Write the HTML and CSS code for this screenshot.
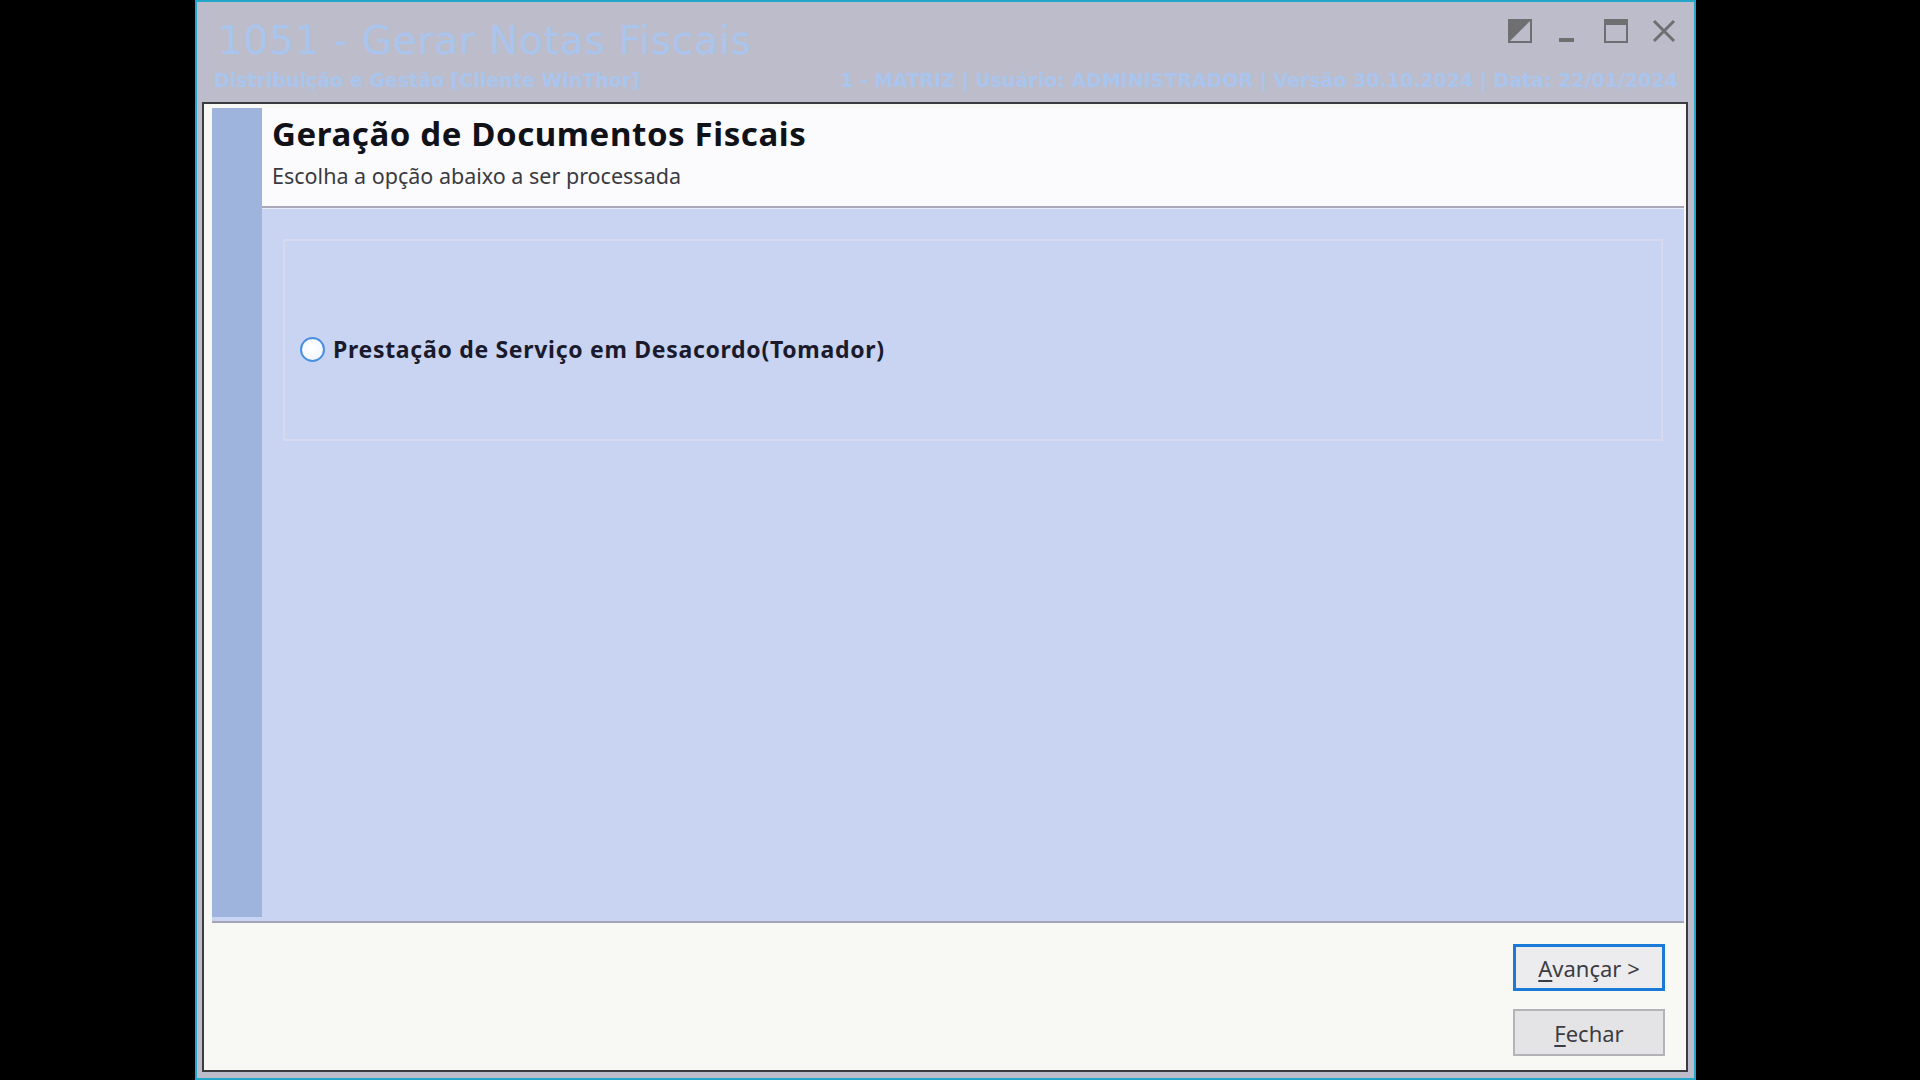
FILE: index.html
```html
<!DOCTYPE html>
<html lang="pt-BR">
<head>
<meta charset="utf-8">
<title>1051 - Gerar Notas Fiscais</title>
<link rel="stylesheet" href="styles.css">
</head>
<body>
<div class="window">
  <div class="titlebar">
    <div class="title-row">
      <div class="app-title">1051 - Gerar Notas Fiscais</div>
      <div class="controls">
        <svg class="ctl" viewBox="0 0 24 24" width="24" height="24" aria-hidden="true">
          <polygon points="1,1 23,1 1,23" fill="#6f6f72"/>
          <rect x="1" y="1" width="22" height="22" fill="none" stroke="#6f6f72" stroke-width="2"/>
        </svg>
        <svg class="ctl" viewBox="0 0 24 24" width="24" height="24" aria-hidden="true">
          <rect x="3" y="19" width="15" height="4" fill="#6f6f72"/>
        </svg>
        <svg class="ctl" viewBox="0 0 24 24" width="24" height="24" aria-hidden="true">
          <rect x="1" y="1" width="22" height="22" fill="none" stroke="#6f6f72" stroke-width="2"/>
          <rect x="1" y="1" width="22" height="5" fill="#6f6f72"/>
        </svg>
        <svg class="ctl" viewBox="0 0 24 24" width="24" height="24" aria-hidden="true">
          <path d="M2 2 L22 22 M22 2 L2 22" stroke="#6f6f72" stroke-width="3" fill="none"/>
        </svg>
      </div>
    </div>
    <div class="sub-row">
      <span>Distribuição e Gestão [Cliente WinThor]</span>
      <span>1 - MATRIZ | Usuário: ADMINISTRADOR | Versão 30.10.2024 | Data: 22/01/2024</span>
    </div>
  </div>
  <div class="panel">
    <div class="wizard">
      <div class="strip"></div>
      <div class="main">
        <div class="header">
          <h1 class="wiz-title">Geração de Documentos Fiscais</h1>
          <p class="wiz-sub">Escolha a opção abaixo a ser processada</p>
        </div>
        <div class="content">
          <div class="group">
            <label class="radio">
              <span class="dot"></span>
              <span class="radio-text">Prestação de Serviço em Desacordo(Tomador)</span>
            </label>
          </div>
        </div>
      </div>
    </div>
    <div class="footer">
      <button class="btn primary" type="button"><u>A</u>vançar &gt;</button>
      <button class="btn" type="button"><u>F</u>echar</button>
    </div>
  </div>
</div>
</body>
</html>
```

FILE: styles.css
```css
html, body {
  margin: 0;
  padding: 0;
  width: 1920px;
  height: 1080px;
  overflow: hidden;
  background: #000;
}

.window {
  margin-left: 195px;
  width: 1501px;
  height: 1080px;
  box-sizing: border-box;
  border: 2px solid #22a6c9;
  background: #bcbccb;
  display: flex;
  flex-direction: column;
}

.titlebar {
  height: 100px;
  box-sizing: border-box;
  padding: 0 18px 0 21px;
  color: #a9c5ee;
}

.title-row {
  display: flex;
  justify-content: space-between;
  height: 64px;
}

.app-title {
  font-family: "DejaVu Sans", sans-serif;
  font-size: 39px;
  line-height: 44px;
  letter-spacing: 0.8px;
  padding-top: 17px;
}

.controls {
  display: flex;
  gap: 24px;
  padding-top: 17px;
  height: 24px;
}

.ctl {
  display: block;
}

.sub-row {
  display: flex;
  justify-content: space-between;
  font-family: "DejaVu Sans", sans-serif;
  font-weight: bold;
  font-size: 19px;
  line-height: 22px;
  padding-top: 3px;
  margin-right: -2px;
  margin-left: -4px;
}

.panel {
  flex: 1;
  margin: 0 6px 6px 5px;
  border: 2px solid #3c3c40;
  background: #f8f8f5;
  display: flex;
  flex-direction: column;
  min-height: 0;
}

.wizard {
  display: flex;
  margin: 4px 2px 0 8px;
  height: 815px;
  box-sizing: border-box;
  border-bottom: 2px solid #a4a4b4;
  background: #c8d4f1;
}

.strip {
  width: 50px;
  background: #9fb4dd;
  margin-bottom: 4px;
}

.main {
  flex: 1;
  display: flex;
  flex-direction: column;
}

.header {
  height: 98px;
  background: #fbfbfe;
  border-bottom: 2px solid #a9a9ba;
  padding-left: 10px;
}

.wiz-title {
  margin: 6px 0 0 0;
  font-family: "Noto Sans", sans-serif;
  font-weight: bold;
  font-size: 33px;
  line-height: 40px;
  letter-spacing: 0.6px;
  color: #111118;
}

.wiz-sub {
  margin: 9px 0 0 0;
  font-family: "Noto Sans", sans-serif;
  font-size: 21.5px;
  line-height: 26px;
  color: #3a3a40;
}

.content {
  flex: 1;
  padding: 30px 21px 0 21px;
  border-top: 1px solid #e8ecf8;
}

.group {
  height: 202px;
  box-sizing: border-box;
  border: 2px solid #d7d9ec;
  padding: 94px 0 0 15px;
}

.radio {
  display: flex;
  align-items: center;
  gap: 8px;
}

.dot {
  width: 25px;
  height: 25px;
  box-sizing: border-box;
  border-radius: 50%;
  border: 2px solid #4a8fe0;
  background: radial-gradient(circle at 45% 40%, #ffffff 0%, #f6f8fd 60%, #e4ebf8 100%);
}

.radio-text {
  font-family: "Noto Sans", sans-serif;
  font-weight: bold;
  font-size: 23px;
  line-height: 28px;
  letter-spacing: 0.7px;
  color: #1a1a2c;
}

.footer {
  flex: 1;
  display: flex;
  flex-direction: column;
  align-items: flex-end;
  gap: 18px;
  padding: 21px 21px 0 0;
}

.btn {
  width: 152px;
  height: 47px;
  box-sizing: border-box;
  margin: 0;
  padding: 0;
  font-family: "Noto Sans", sans-serif;
  font-size: 22px;
  color: #3c3c44;
  background: #e4e4e6;
  border: 2px solid #b4b4b8;
  border-radius: 0;
}

.btn.primary {
  border: 3px solid #1a7ad8;
  background: #ececef;
}

.btn u {
  text-underline-offset: 3px;
}
```
